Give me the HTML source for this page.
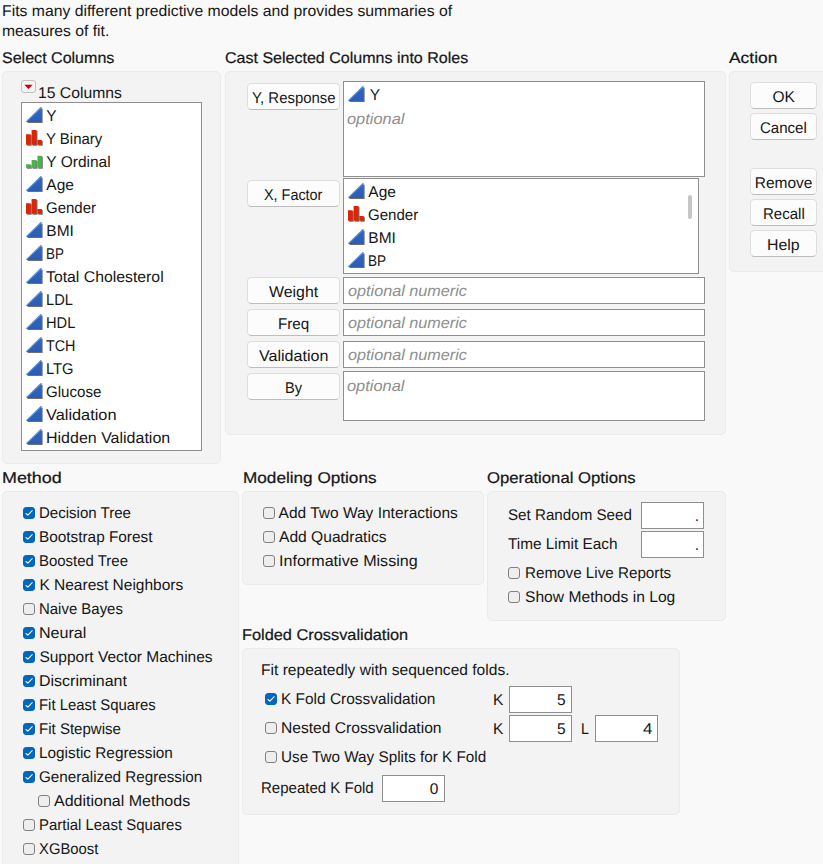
<!DOCTYPE html>
<html><head><meta charset="utf-8"><title>Model Screening</title>
<style>
html,body{margin:0;padding:0;}
body{width:823px;height:864px;overflow:hidden;background:#f9f9f9;position:relative;font-family:"Liberation Sans",sans-serif;font-size:15.5px;color:#161616;text-rendering:geometricPrecision;}
.a,.h,.ph{position:absolute;white-space:nowrap;line-height:20px;height:20px;transform-origin:0 50%;}
.h{-webkit-text-stroke:0.22px #161616;}
.ph{font-style:italic;color:#8e8e8e;}
.panel{position:absolute;background:#f3f3f3;border:1px solid #ebebeb;border-radius:5px;box-sizing:border-box;}
.lb{position:absolute;background:#fff;border:1px solid #8f8f8f;box-sizing:border-box;}
.btn{position:absolute;box-sizing:border-box;background:#fcfcfc;border:1px solid #dedede;border-bottom-color:#bdbdbd;border-radius:4.5px;height:27px;}
.cb{position:absolute;width:12px;height:12px;box-sizing:border-box;border:1px solid #808080;border-radius:3px;background:#eee;}
.cb.on{background:#0067c0;border-color:#0067c0;}
.cb svg{position:absolute;left:-1px;top:-1px;}
.ic{position:absolute;width:18px;height:17px;overflow:visible;}
</style></head><body>
<svg width="0" height="0" style="position:absolute">
<defs>
<linearGradient id="gb" x1="0" y1="0" x2="0" y2="1"><stop offset="0" stop-color="#3369c0"/><stop offset="1" stop-color="#2a5cb2"/></linearGradient>
<g id="cont"><path d="M0 15 L14.6 1 L15.6 0.5 L15.6 15 Z" fill="#6f6f6f" transform="translate(1,1)"/><path d="M0 15 L14.8 0.3 L15.6 0.3 L15.6 15 Z" fill="url(#gb)"/><path d="M0.6 14.4 L15 0.5" stroke="#5f97e2" stroke-width="1.1" fill="none"/></g>
<g id="nom"><path d="M0 4.2h4.7v10.5h-4.7z M5.6 0.1h4.9v14.6h-4.9z M11.4 9.9h4.4v4.8h-4.4z" fill="#737373" transform="translate(1,1)"/><path d="M0 4.2h4.7v10.5h-4.7z M5.6 0.1h4.9v14.6h-4.9z M11.4 9.9h4.4v4.8h-4.4z" fill="#dc2406"/></g>
<g id="ord"><path d="M0 11.2h4.7v3.6h-4.7z M5.6 7.1h4.9v7.7h-4.9z M11.4 2.7h4.4v12.1h-4.4z" fill="#737373" transform="translate(1,1)"/><path d="M0 11.2h4.7v3.6h-4.7z M5.6 7.1h4.9v7.7h-4.9z M11.4 2.7h4.4v12.1h-4.4z" fill="#4bb24f"/></g>
</defs></svg>
<div class="a" style="left:1.8px;top:2px;transform:scaleX(1.017);">Fits many different predictive models and provides summaries of</div>
<div class="a" style="left:1.8px;top:22px;transform:scaleX(1.013);">measures of fit.</div>
<div class="h" style="left:1.5px;top:49px;transform:scaleX(1.035);">Select Columns</div>
<div class="h" style="left:224.5px;top:49px;transform:scaleX(1.034);">Cast Selected Columns into Roles</div>
<div class="h" style="left:728.75px;top:49px;transform:scaleX(1.122);">Action</div>
<div class="panel" style="left:2px;top:71px;width:219px;height:393px;"></div>
<div style="position:absolute;left:21px;top:80px;width:15px;height:13px;box-sizing:border-box;border:1px solid #c0c0c0;border-radius:3px;background:#f4f4f4;"><svg width="13" height="11" style="position:absolute;left:0;top:0"><path d="M2.3 3.7 L10.7 3.7 L6.5 8.1 Z" fill="#d40000"/></svg></div>
<div class="a" style="left:37.75px;top:84px;transform:scaleX(1.014);">15 Columns</div>
<div class="lb" style="left:21px;top:102px;width:181px;height:349px;"></div>
<svg class="ic" style="left:26px;top:107px;"><use href="#cont"/></svg>
<div class="a" style="left:46.3px;top:107px;">Y</div>
<svg class="ic" style="left:26px;top:130px;"><use href="#nom"/></svg>
<div class="a" style="left:46.3px;top:130px;transform:scaleX(0.965);">Y Binary</div>
<svg class="ic" style="left:26px;top:153px;"><use href="#ord"/></svg>
<div class="a" style="left:46.3px;top:153px;">Y Ordinal</div>
<svg class="ic" style="left:26px;top:176px;"><use href="#cont"/></svg>
<div class="a" style="left:46.3px;top:176px;">Age</div>
<svg class="ic" style="left:26px;top:199px;"><use href="#nom"/></svg>
<div class="a" style="left:46.3px;top:199px;transform:scaleX(0.968);">Gender</div>
<svg class="ic" style="left:26px;top:222px;"><use href="#cont"/></svg>
<div class="a" style="left:46.3px;top:222px;">BMI</div>
<svg class="ic" style="left:26px;top:245px;"><use href="#cont"/></svg>
<div class="a" style="left:46.3px;top:245px;transform:scaleX(0.866);">BP</div>
<svg class="ic" style="left:26px;top:268px;"><use href="#cont"/></svg>
<div class="a" style="left:46.3px;top:268px;transform:scaleX(1.019);">Total Cholesterol</div>
<svg class="ic" style="left:26px;top:291px;"><use href="#cont"/></svg>
<div class="a" style="left:46.3px;top:291px;transform:scaleX(0.947);">LDL</div>
<svg class="ic" style="left:26px;top:314px;"><use href="#cont"/></svg>
<div class="a" style="left:46.3px;top:314px;transform:scaleX(0.944);">HDL</div>
<svg class="ic" style="left:26px;top:337px;"><use href="#cont"/></svg>
<div class="a" style="left:46.3px;top:337px;transform:scaleX(0.925);">TCH</div>
<svg class="ic" style="left:26px;top:360px;"><use href="#cont"/></svg>
<div class="a" style="left:46.3px;top:360px;transform:scaleX(0.952);">LTG</div>
<svg class="ic" style="left:26px;top:383px;"><use href="#cont"/></svg>
<div class="a" style="left:46.3px;top:383px;transform:scaleX(0.975);">Glucose</div>
<svg class="ic" style="left:26px;top:406px;"><use href="#cont"/></svg>
<div class="a" style="left:46.3px;top:406px;transform:scaleX(1.054);">Validation</div>
<svg class="ic" style="left:26px;top:429px;"><use href="#cont"/></svg>
<div class="a" style="left:46.3px;top:429px;transform:scaleX(1.032);">Hidden Validation</div>
<div class="panel" style="left:225px;top:71px;width:501px;height:364px;"></div>
<div class="btn" style="left:247px;top:83px;width:93px;"></div>
<div class="a" style="left:251.5px;top:89px;transform:scaleX(0.964);">Y, Response</div>
<div class="lb" style="left:343px;top:81px;width:362px;height:96px;"></div>
<svg class="ic" style="left:348px;top:86px;"><use href="#cont"/></svg>
<div class="a" style="left:369.75px;top:86px;">Y</div>
<div class="ph" style="left:346.5px;top:110px;transform:scaleX(1.057);">optional</div>
<div class="btn" style="left:247px;top:180px;width:93px;"></div>
<div class="a" style="left:263.75px;top:186px;transform:scaleX(0.929);">X, Factor</div>
<div class="lb" style="left:343px;top:178px;width:356px;height:96px;"></div>
<svg class="ic" style="left:348px;top:183px;"><use href="#cont"/></svg>
<div class="a" style="left:368.3px;top:183px;">Age</div>
<svg class="ic" style="left:348px;top:206px;"><use href="#nom"/></svg>
<div class="a" style="left:368.3px;top:206px;transform:scaleX(0.970);">Gender</div>
<svg class="ic" style="left:348px;top:229px;"><use href="#cont"/></svg>
<div class="a" style="left:368.3px;top:229px;">BMI</div>
<svg class="ic" style="left:348px;top:252px;"><use href="#cont"/></svg>
<div class="a" style="left:368.3px;top:252px;transform:scaleX(0.877);">BP</div>
<div style="position:absolute;left:688px;top:195px;width:4px;height:24px;border-radius:2px;background:#c6c6c6;"></div>
<div class="btn" style="left:247px;top:277px;width:93px;"></div>
<div class="a" style="left:268.75px;top:283px;transform:scaleX(1.025);">Weight</div>
<div class="lb" style="left:343px;top:277px;width:362px;height:27px;"></div>
<div class="ph" style="left:347.5px;top:282px;transform:scaleX(1.046);">optional numeric</div>
<div class="btn" style="left:247px;top:309px;width:93px;"></div>
<div class="a" style="left:277.5px;top:315px;transform:scaleX(0.979);">Freq</div>
<div class="lb" style="left:343px;top:309px;width:362px;height:27px;"></div>
<div class="ph" style="left:347.5px;top:314px;transform:scaleX(1.046);">optional numeric</div>
<div class="btn" style="left:247px;top:341px;width:93px;"></div>
<div class="a" style="left:258.5px;top:347px;transform:scaleX(1.037);">Validation</div>
<div class="lb" style="left:343px;top:341px;width:362px;height:27px;"></div>
<div class="ph" style="left:347.5px;top:346px;transform:scaleX(1.046);">optional numeric</div>
<div class="btn" style="left:247px;top:373px;width:93px;"></div>
<div class="a" style="left:284.75px;top:379px;transform:scaleX(0.946);">By</div>
<div class="lb" style="left:343px;top:371px;width:362px;height:50px;"></div>
<div class="ph" style="left:346.5px;top:377px;transform:scaleX(1.057);">optional</div>
<div class="panel" style="left:729px;top:71px;width:111px;height:201px;"></div>
<div class="btn" style="left:750px;top:82px;width:67px;"></div>
<div class="a" style="left:772.5px;top:88px;">OK</div>
<div class="btn" style="left:750px;top:113px;width:67px;"></div>
<div class="a" style="left:759.5px;top:119px;transform:scaleX(0.969);">Cancel</div>
<div class="btn" style="left:750px;top:168px;width:67px;"></div>
<div class="a" style="left:754.75px;top:174px;">Remove</div>
<div class="btn" style="left:750px;top:199px;width:67px;"></div>
<div class="a" style="left:762.5px;top:205px;transform:scaleX(0.969);">Recall</div>
<div class="btn" style="left:750px;top:230px;width:67px;"></div>
<div class="a" style="left:767px;top:236px;transform:scaleX(1.023);">Help</div>
<div class="h" style="left:1.5px;top:469px;transform:scaleX(1.155);">Method</div>
<div class="panel" style="left:2px;top:491px;width:237px;height:389px;"></div>
<div class="cb on" style="left:23px;top:507px;"><svg width="12" height="12"><path d="M3 6.5 L4.9 8.2 L9.2 3.7" fill="none" stroke="#fff" stroke-width="1.05" stroke-linecap="round" stroke-linejoin="round"/></svg></div>
<div class="a" style="left:39.4px;top:504px;transform:scaleX(0.970);">Decision Tree</div>
<div class="cb on" style="left:23px;top:531px;"><svg width="12" height="12"><path d="M3 6.5 L4.9 8.2 L9.2 3.7" fill="none" stroke="#fff" stroke-width="1.05" stroke-linecap="round" stroke-linejoin="round"/></svg></div>
<div class="a" style="left:39.4px;top:528px;transform:scaleX(0.990);">Bootstrap Forest</div>
<div class="cb on" style="left:23px;top:555px;"><svg width="12" height="12"><path d="M3 6.5 L4.9 8.2 L9.2 3.7" fill="none" stroke="#fff" stroke-width="1.05" stroke-linecap="round" stroke-linejoin="round"/></svg></div>
<div class="a" style="left:39.4px;top:552px;transform:scaleX(0.965);">Boosted Tree</div>
<div class="cb on" style="left:23px;top:579px;"><svg width="12" height="12"><path d="M3 6.5 L4.9 8.2 L9.2 3.7" fill="none" stroke="#fff" stroke-width="1.05" stroke-linecap="round" stroke-linejoin="round"/></svg></div>
<div class="a" style="left:39.4px;top:576px;">K Nearest Neighbors</div>
<div class="cb" style="left:23px;top:603px;"></div>
<div class="a" style="left:39.4px;top:600px;transform:scaleX(0.964);">Naive Bayes</div>
<div class="cb on" style="left:23px;top:627px;"><svg width="12" height="12"><path d="M3 6.5 L4.9 8.2 L9.2 3.7" fill="none" stroke="#fff" stroke-width="1.05" stroke-linecap="round" stroke-linejoin="round"/></svg></div>
<div class="a" style="left:39.4px;top:624px;transform:scaleX(1.038);">Neural</div>
<div class="cb on" style="left:23px;top:651px;"><svg width="12" height="12"><path d="M3 6.5 L4.9 8.2 L9.2 3.7" fill="none" stroke="#fff" stroke-width="1.05" stroke-linecap="round" stroke-linejoin="round"/></svg></div>
<div class="a" style="left:39.4px;top:648px;">Support Vector Machines</div>
<div class="cb on" style="left:23px;top:675px;"><svg width="12" height="12"><path d="M3 6.5 L4.9 8.2 L9.2 3.7" fill="none" stroke="#fff" stroke-width="1.05" stroke-linecap="round" stroke-linejoin="round"/></svg></div>
<div class="a" style="left:39.4px;top:672px;transform:scaleX(1.031);">Discriminant</div>
<div class="cb on" style="left:23px;top:699px;"><svg width="12" height="12"><path d="M3 6.5 L4.9 8.2 L9.2 3.7" fill="none" stroke="#fff" stroke-width="1.05" stroke-linecap="round" stroke-linejoin="round"/></svg></div>
<div class="a" style="left:39.4px;top:696px;transform:scaleX(0.961);">Fit Least Squares</div>
<div class="cb on" style="left:23px;top:723px;"><svg width="12" height="12"><path d="M3 6.5 L4.9 8.2 L9.2 3.7" fill="none" stroke="#fff" stroke-width="1.05" stroke-linecap="round" stroke-linejoin="round"/></svg></div>
<div class="a" style="left:39.4px;top:720px;transform:scaleX(0.971);">Fit Stepwise</div>
<div class="cb on" style="left:23px;top:747px;"><svg width="12" height="12"><path d="M3 6.5 L4.9 8.2 L9.2 3.7" fill="none" stroke="#fff" stroke-width="1.05" stroke-linecap="round" stroke-linejoin="round"/></svg></div>
<div class="a" style="left:39.4px;top:744px;transform:scaleX(0.990);">Logistic Regression</div>
<div class="cb on" style="left:23px;top:771px;"><svg width="12" height="12"><path d="M3 6.5 L4.9 8.2 L9.2 3.7" fill="none" stroke="#fff" stroke-width="1.05" stroke-linecap="round" stroke-linejoin="round"/></svg></div>
<div class="a" style="left:39.4px;top:768px;transform:scaleX(0.982);">Generalized Regression</div>
<div class="cb" style="left:38px;top:795px;"></div>
<div class="a" style="left:54.4px;top:792px;transform:scaleX(1.033);">Additional Methods</div>
<div class="cb" style="left:23px;top:819px;"></div>
<div class="a" style="left:39.4px;top:816px;transform:scaleX(0.964);">Partial Least Squares</div>
<div class="cb" style="left:23px;top:843px;"></div>
<div class="a" style="left:39.4px;top:840px;transform:scaleX(0.956);">XGBoost</div>
<div class="h" style="left:242.5px;top:469px;transform:scaleX(1.107);">Modeling Options</div>
<div class="panel" style="left:242px;top:491px;width:242px;height:94px;"></div>
<div class="cb" style="left:263px;top:507px;"></div>
<div class="a" style="left:278.6px;top:504px;">Add Two Way Interactions</div>
<div class="cb" style="left:263px;top:531px;"></div>
<div class="a" style="left:278.6px;top:528px;transform:scaleX(1.006);">Add Quadratics</div>
<div class="cb" style="left:263px;top:555px;"></div>
<div class="a" style="left:278.6px;top:552px;transform:scaleX(1.039);">Informative Missing</div>
<div class="h" style="left:486.5px;top:469px;transform:scaleX(1.078);">Operational Options</div>
<div class="panel" style="left:487px;top:491px;width:239px;height:130px;"></div>
<div class="a" style="left:507.6px;top:506px;transform:scaleX(0.978);">Set Random Seed</div>
<div class="lb" style="left:641px;top:502px;width:63px;height:27px;"></div>
<div class="a" style="left:694.75px;top:507px;">.</div>
<div class="a" style="left:507.6px;top:535px;transform:scaleX(0.990);">Time Limit Each</div>
<div class="lb" style="left:641px;top:531px;width:63px;height:27px;"></div>
<div class="a" style="left:694.75px;top:536px;">.</div>
<div class="cb" style="left:508px;top:567px;"></div>
<div class="a" style="left:524.6px;top:564px;transform:scaleX(0.981);">Remove Live Reports</div>
<div class="cb" style="left:508px;top:591px;"></div>
<div class="a" style="left:524.6px;top:588px;transform:scaleX(1.008);">Show Methods in Log</div>
<div class="h" style="left:242px;top:626px;transform:scaleX(1.054);">Folded Crossvalidation</div>
<div class="panel" style="left:242px;top:648px;width:438px;height:167px;"></div>
<div class="a" style="left:260.7px;top:661px;transform:scaleX(1.005);">Fit repeatedly with sequenced folds.</div>
<div class="cb on" style="left:265px;top:693px;"><svg width="12" height="12"><path d="M3 6.5 L4.9 8.2 L9.2 3.7" fill="none" stroke="#fff" stroke-width="1.05" stroke-linecap="round" stroke-linejoin="round"/></svg></div>
<div class="a" style="left:281.4px;top:690px;transform:scaleX(0.996);">K Fold Crossvalidation</div>
<div class="a" style="left:493px;top:691px;">K</div>
<div class="lb" style="left:509px;top:686px;width:63px;height:27px;"></div>
<div class="a" style="left:557px;top:691px;">5</div>
<div class="cb" style="left:265px;top:722px;"></div>
<div class="a" style="left:281.4px;top:719px;transform:scaleX(1.007);">Nested Crossvalidation</div>
<div class="a" style="left:493px;top:720px;">K</div>
<div class="lb" style="left:509px;top:715px;width:63px;height:27px;"></div>
<div class="a" style="left:557px;top:720px;">5</div>
<div class="a" style="left:580.75px;top:720px;transform:scaleX(0.920);">L</div>
<div class="lb" style="left:595px;top:715px;width:63px;height:27px;"></div>
<div class="a" style="left:642.5px;top:720px;transform:scaleX(1.091);">4</div>
<div class="cb" style="left:265px;top:751px;"></div>
<div class="a" style="left:281.4px;top:748px;transform:scaleX(0.984);">Use Two Way Splits for K Fold</div>
<div class="a" style="left:260.7px;top:779px;transform:scaleX(0.969);">Repeated K Fold</div>
<div class="lb" style="left:382px;top:775px;width:63px;height:27px;"></div>
<div class="a" style="left:429.75px;top:780px;">0</div>
</body></html>
